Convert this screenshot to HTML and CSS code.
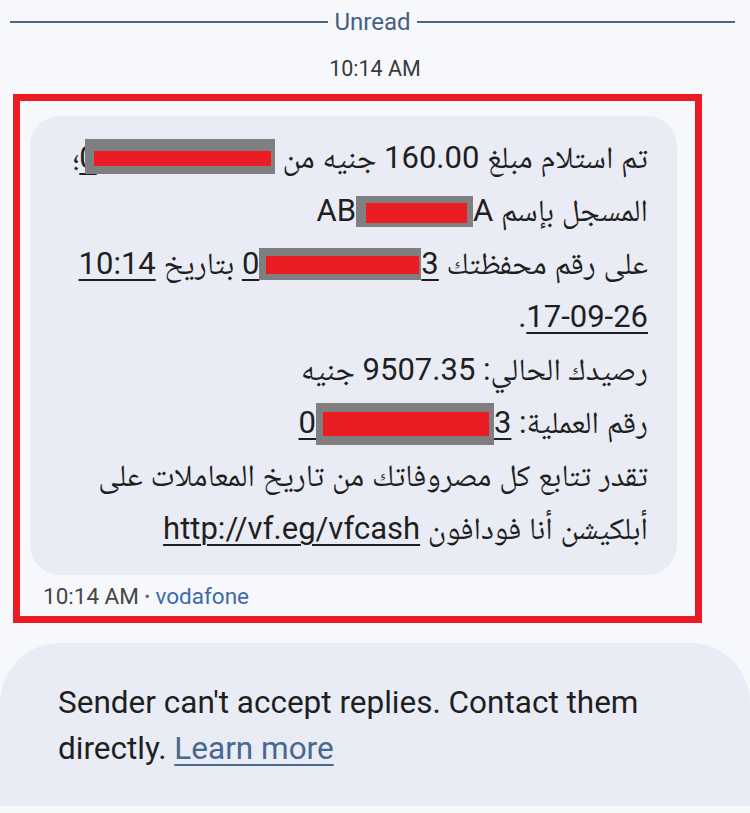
FILE: index.html
```html
<!DOCTYPE html>
<html lang="en">
<head>
<meta charset="utf-8">
<title>Messages</title>
<link rel="stylesheet" href="styles.css">
</head>
<body>
<div class="page">
  <div class="divider">
    <span class="rule"></span>
    <span class="divider-label">Unread</span>
    <span class="rule"></span>
  </div>
  <div class="stamp">10:14 AM</div>

  <div class="highlight">
    <div class="bubble" dir="rtl" lang="ar">
      تم استلام مبلغ 160.00 جنيه من <bdi class="link">0<span class="redact r1"><span class="bar"></span></span></bdi>؛<br>
      المسجل بإسم <bdi>AB<span class="redact r2"><span class="bar"></span></span>A</bdi><br>
      على رقم محفظتك <bdi class="link">0<span class="redact r3"><span class="bar"></span></span>3</bdi> بتاريخ <span class="link">10:14</span><br>
      <span class="link">17-09-26</span>.<br>
      رصيدك الحالي: 9507.35 جنيه<br>
      رقم العملية: <bdi class="link">0<span class="redact r4"><span class="bar"></span></span>3</bdi><br>
      تقدر تتابع كل مصروفاتك من تاريخ المعاملات على<br>
      أبلكيشن أنا فودافون <span class="link">http://vf.eg/vfcash</span>
    </div>
    <div class="meta">10:14 AM <span class="dot">•</span> <span class="sender">vodafone</span></div>
  </div>

  <div class="notice">
    <p>Sender can't accept replies. Contact them directly. <a class="learn" href="#">Learn more</a></p>
  </div>
</div>
</body>
</html>
```

FILE: styles.css
```css
html, body {
  margin: 0;
  padding: 0;
}
body {
  background: #f7f8fc;
  font-family: Roboto, "Noto Naskh Arabic", "Noto Sans Arabic", "DejaVu Sans", sans-serif;
  color: #1f1f1f;
  width: 750px;
  height: 813px;
  overflow: hidden;
}
.page {
  display: flex;
  flex-direction: column;
}
.divider {
  display: flex;
  align-items: center;
  gap: 6px;
  padding: 8px 15px 0 10px;
  height: 28px;
}
.rule {
  flex: 1;
  height: 2px;
  background: #4b6886;
}
.divider-label {
  font-size: 24px;
  color: #44617f;
  line-height: 28px;
}
.stamp {
  text-align: center;
  font-size: 21.5px;
  color: #3a3a3a;
  line-height: 28px;
  margin-top: 19px;
}
.highlight {
  box-sizing: border-box;
  margin: 11px 0 0 13px;
  width: 689px;
  height: 529px;
  border: 7px solid #ec1c24;
  background: #f7f8fc;
  padding: 15px 18px 0 10px;
}
.bubble {
  background: #e9ecf4;
  border-radius: 30px;
  padding: 15px 29px 20px 20px;
  font-size: 31px;
  line-height: 53px;
  text-align: right;
  color: #1f1f1f;
  white-space: nowrap;
}
.link {
  text-decoration: underline;
  text-decoration-thickness: 2px;
  text-underline-offset: 5px;
}
.redact {
  display: inline-block;
  background: #7f7f7f;
  vertical-align: -6px;
  box-sizing: border-box;
}
.bar {
  display: block;
  background: #ec1c24;
  height: 100%;
}
.r1 { width: 190px; height: 35px; padding: 12px 4px 8px 9px; margin-left: -12px; }
.r2 { width: 117px; height: 31px; padding: 7px 6px 4px 10px; }
.r3 { width: 162px; height: 32px; padding: 8px 2px 6px 7px; }
.r4 { width: 178px; height: 42px; padding: 9px 5px 9px 7px; vertical-align: -12px; }
.meta {
  font-size: 22.5px;
  color: #444746;
  padding: 7px 0 0 13px;
  line-height: 28px;
}
.dot {
  font-size: 16px;
  vertical-align: 2px;
  color: #5f6368;
}
.sender {
  color: #3d6aa8;
}
.notice {
  margin-top: 20px;
  background: #e9ecf4;
  border-radius: 60px 60px 0 0;
  height: 163px;
  padding: 0 40px 0 58px;
  box-sizing: border-box;
}
.notice p {
  margin: 0;
  padding-top: 37px;
  font-size: 31.5px;
  line-height: 46px;
  color: #1f1f1f;
}
.learn {
  color: #48698f;
  text-decoration: underline;
  text-decoration-thickness: 2px;
  text-underline-offset: 5px;
}
```
